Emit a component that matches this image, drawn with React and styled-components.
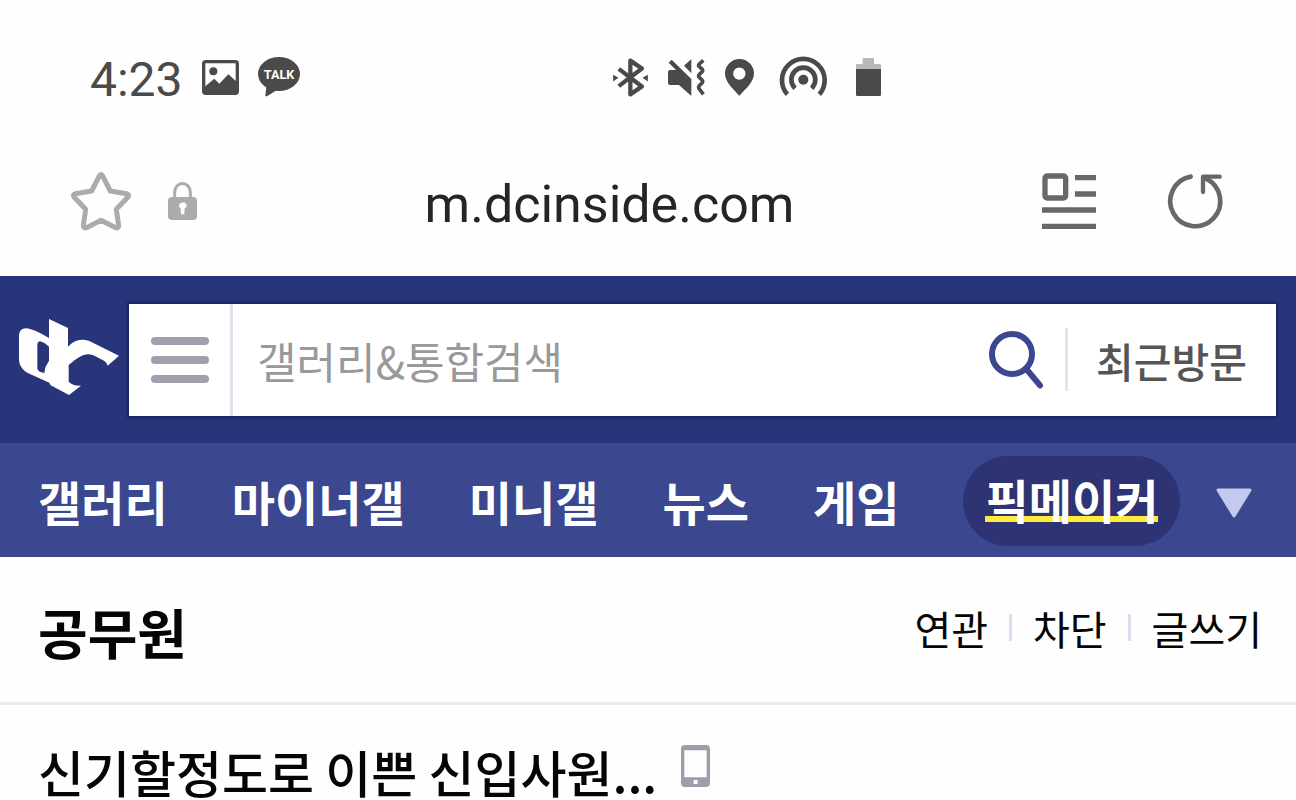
import React from "react";
import styled, { createGlobalStyle } from "styled-components";

const GlobalStyle = createGlobalStyle`
  * {
    box-sizing: border-box;
  }

  body {
    margin: 0;
    background: #fefefe;
    color: #050505;
    font-family: "Noto Sans CJK KR", "Noto Sans", sans-serif;
  }

  svg {
    display: block;
    flex: none;
    overflow: visible;
  }
`;

const IconButton = styled.button`
  display: flex;
  padding: 0;
  border: 0;
  background: none;
  color: inherit;
  cursor: pointer;
`;

const StatusBar = styled.div`
  display: flex;
  justify-content: space-between;
  align-items: center;
  height: 154px;
  padding: 0 412px 0 90px;
  color: #4a4a4a;
`;

const StatusGroup = styled.div`
  display: flex;
  align-items: center;
  gap: ${(props) => props.$gap}px;
`;

const Clock = styled.time`
  padding-top: 5px;
  font-family: Roboto, sans-serif;
  font-size: 48px;
  line-height: 56px;
`;

const AddressBar = styled.div`
  display: flex;
  align-items: center;
  height: 122px;
  padding: 0 74px 28px 71px;
`;

const AddressGroup = styled.div`
  display: flex;
  align-items: center;
  gap: ${(props) => props.$gap}px;
  color: ${(props) => props.$color};
`;

const Address = styled.div`
  flex: 1;
  padding: 8px 20px 0 0;
  color: #252525;
  font-family: Roboto, sans-serif;
  font-size: 52px;
  line-height: 64px;
  text-align: center;
`;

const Header = styled.header`
  display: flex;
  align-items: center;
  height: 167px;
  padding: 0 20px 0 19px;
  background: #29357a;
`;

const Logo = styled.a`
  margin: 0 10px 5px 0;
`;

const SearchForm = styled.form`
  display: flex;
  flex: 1;
  align-items: center;
  height: 112px;
  background: #fff;
  box-shadow: 0 0 2px 2px #1b2560;
`;

const MenuButton = styled(IconButton)`
  align-items: center;
  justify-content: center;
  width: 104px;
  height: 100%;
  border-right: 3px solid #e3e2ec;
  color: #a09fac;
`;

const SearchInput = styled.input`
  flex: 1;
  min-width: 0;
  height: 100%;
  padding: 0 24px;
  border: 0;
  outline: 0;
  background: none;
  font-family: inherit;
  font-size: 43px;

  &::placeholder {
    color: #999;
    opacity: 1;
  }
`;

const Divider = styled.span`
  width: 3px;
  height: ${(props) => props.$height}px;
  margin: 0 ${(props) => props.$space}px;
  background: ${(props) => props.$color};
`;

const RecentButton = styled(IconButton)`
  margin: 0 29px 0 6px;
  color: #555;
  font-family: inherit;
  font-size: 41px;
  font-weight: 500;
  line-height: 60px;
`;

const Nav = styled.nav`
  display: flex;
  align-items: center;
  justify-content: space-between;
  height: 114px;
  padding: 2px 44px 0 38px;
  background: #3b478e;
  color: #fff;
`;

const NavList = styled.div`
  display: flex;
  align-items: center;
  gap: 64px;
`;

const NavLink = styled.a`
  color: inherit;
  font-size: 47px;
  font-weight: 700;
  line-height: 60px;
  text-decoration: none;
  white-space: nowrap;
`;

const NavPill = styled(NavLink)`
  display: flex;
  align-items: center;
  height: 90px;
  padding: 0 22px 4px;
  border-radius: 45px;
  background: #2d3373;
`;

const Underlined = styled.span`
  background: linear-gradient(#ffeb3b, #ffeb3b) 0 47px / 100% 6px no-repeat;
`;

const MoreButton = styled(IconButton)`
  padding-top: 4px;
  color: #c5c9ef;
`;

const GalleryHead = styled.div`
  display: flex;
  align-items: center;
  justify-content: space-between;
  height: 148px;
  padding: 0 34px 0 38px;
  border-bottom: 3px solid #ebebeb;
`;

const GalleryName = styled.h1`
  margin: 0;
  padding-top: 4px;
  font-size: 54px;
  font-weight: 700;
  line-height: 72px;
`;

const GalleryLinks = styled.div`
  display: flex;
  align-items: center;
  padding-bottom: 4px;
`;

const GalleryLink = styled.a`
  color: inherit;
  font-size: 40px;
  line-height: 60px;
  text-decoration: none;
`;

const Post = styled.article`
  display: flex;
  align-items: center;
  gap: 24px;
  padding: 31px 38px 4px;
`;

const PostTitle = styled.h2`
  margin: 0;
  padding-top: 10px;
  font-size: 50px;
  font-weight: 500;
  line-height: 50px;
`;

const PictureIcon = () => (
  <svg width="37" height="35" viewBox="0 0 111 105" aria-hidden="true">
    <rect x="5" y="5" width="101" height="95" rx="6" fill="none" stroke="currentColor" strokeWidth="10" />
    <circle cx="34" cy="34" r="12" fill="currentColor" />
    <path d="M8 80L37 56L52 71L79 43L104 65V98H8Z" fill="currentColor" />
  </svg>
);

const TalkIcon = () => (
  <svg width="42" height="40" viewBox="0 0 126 120" role="img" aria-label="TALK">
    <ellipse cx="63" cy="51" rx="63" ry="51" fill="currentColor" />
    <path d="M26 84L22 115Q23 120 28 117L58 98Z" fill="currentColor" />
    <text
      x="63"
      y="67"
      fill="#fff"
      fontFamily="Roboto, sans-serif"
      fontSize="38"
      fontWeight="700"
      textAnchor="middle"
    >
      TALK
    </text>
  </svg>
);

const BluetoothIcon = () => (
  <svg width="35" height="39" viewBox="0 0 105 118" fill="currentColor" aria-hidden="true">
    <path
      d="M17 33L87 86L52 110V8L87 32L17 85"
      fill="none"
      stroke="currentColor"
      strokeWidth="13"
      strokeLinejoin="round"
    />
    <path d="M0 51L16 60L0 71ZM105 51L89 60L105 71Z" />
  </svg>
);

const MuteIcon = () => (
  <svg width="37" height="37" viewBox="0 0 111 111" fill="currentColor" aria-hidden="true">
    <path d="M6 33H24L2 11L11 2L70 60V111L33 78H6Q0 78 0 72V39Q0 33 6 33Z" />
    <path d="M48 20L70 0V43Z" />
    <path
      d="M106 4L94 15Q90 19 94 23L102 30Q106 35 102 39L94 46Q90 51 94 55L102 63Q106 68 102 72L94 80Q90 85 94 90L106 106"
      fill="none"
      stroke="currentColor"
      strokeWidth="11"
    />
  </svg>
);

const PinIcon = () => (
  <svg width="29" height="37" viewBox="0 0 89 112" fill="currentColor" aria-hidden="true">
    <path
      fillRule="evenodd"
      d="M44 112C20 87 0 68 0 44A44 44 0 0 1 89 44C89 68 68 87 44 112ZM44 25A19 19 0 1 0 44 63A19 19 0 1 0 44 25Z"
    />
  </svg>
);

const HotspotIcon = () => (
  <svg width="59" height="40" viewBox="-18 3 177 120" fill="none" stroke="currentColor" strokeWidth="14" aria-hidden="true">
    <circle cx="70" cy="71" r="15" fill="currentColor" stroke="none" />
    <path d="M45 97A36 36 0 1 1 95 97" />
    <path d="M22 115A64 64 0 1 1 118 115" />
  </svg>
);

const BatteryIcon = () => (
  <svg width="31" height="38" viewBox="-9 0 93 114" aria-hidden="true">
    <path d="M20 3Q20 0 23 0H51Q54 0 54 3V18H72Q75 18 75 21V40H0V21Q0 18 3 18H20Z" fill="#b8b8b8" />
    <path d="M0 33H75V110Q75 114 71 114H4Q0 114 0 110Z" fill="currentColor" />
  </svg>
);

const StarIcon = () => (
  <svg width="60" height="58" viewBox="62 64 180 174" aria-hidden="true">
    <path
      d="M147 76Q152 67 157 76L180 121L229 129Q238 132 233 139L198 176L205 225Q204 234 196 231L152 209L109 231Q100 234 99 225L106 176L71 139Q66 132 75 129L124 121Z"
      fill="none"
      stroke="currentColor"
      strokeWidth="15"
      strokeLinejoin="round"
    />
  </svg>
);

const LockIcon = () => (
  <svg width="29" height="38" viewBox="0 0 87 114" aria-hidden="true">
    <path d="M20 50V30A23 25 0 0 1 67 30V50" fill="none" stroke="currentColor" strokeWidth="9" />
    <path
      fillRule="evenodd"
      fill="currentColor"
      d="M12 45H75Q87 45 87 57V103Q87 114 75 114H12Q0 114 0 103V57Q0 45 12 45ZM43 62A9 9 0 0 0 38 79L39 97H49L50 79A9 9 0 0 0 43 62Z"
    />
  </svg>
);

const ReaderIcon = () => (
  <svg width="54" height="56" viewBox="0 0 162 168" fill="none" stroke="currentColor" strokeWidth="16" aria-hidden="true">
    <rect x="9" y="9" width="62" height="66" rx="7" />
    <path d="M99 14H162M99 63H162M0 111H162M0 160H162" />
  </svg>
);

const RefreshIcon = () => (
  <svg width="54" height="54" viewBox="0 0 162 162" fill="none" stroke="currentColor" strokeWidth="14" strokeLinecap="round" strokeLinejoin="round" aria-hidden="true">
    <path d="M68 8A75 75 0 1 0 114 14" />
    <path d="M155 8H105V54" strokeWidth="13" />
  </svg>
);

const DcLogo = () => (
  <svg width="100" height="76" viewBox="27 25 300 228" fill="#fff" aria-hidden="true">
    <path
      fillRule="evenodd"
      d="M27 78C27 60 36 52 50 53C68 55 96 70 117 82V25L174 52V108C192 88 212 82 238 91L327 135L293 165Q290 154 282 150L250 134C226 124 206 138 176 163V213C185 221 196 226 213 225L177 253L122 224L118 216L55 188C36 178 27 162 27 145ZM82 104Q82 92 91 92Q106 96 117 108V150L106 170L103 187Q82 184 82 172Z"
    />
  </svg>
);

const HamburgerIcon = () => (
  <svg width="58" height="46" viewBox="0 0 58 46" fill="currentColor" aria-hidden="true">
    <rect width="58" height="8" rx="4" />
    <rect y="19" width="58" height="8" rx="4" />
    <rect y="38" width="58" height="8" rx="4" />
  </svg>
);

const SearchIcon = () => (
  <svg width="54" height="58" viewBox="0 0 162 174" fill="none" stroke="#3b4890" aria-hidden="true">
    <circle cx="69" cy="69" r="60" strokeWidth="18" />
    <path d="M112 114L153 163" strokeWidth="18" strokeLinecap="round" />
  </svg>
);

const TriangleIcon = () => (
  <svg width="36" height="30" viewBox="0 0 36 30" aria-hidden="true">
    <path d="M2 2H34L18 28Z" fill="currentColor" stroke="currentColor" strokeWidth="3" strokeLinejoin="round" />
  </svg>
);

const PhoneIcon = () => (
  <svg width="29" height="42" viewBox="0 0 87 126" aria-hidden="true">
    <path
      fillRule="evenodd"
      fill="#9f9dab"
      d="M12 0H75Q87 0 87 12V114Q87 126 75 126H12Q0 126 0 114V12Q0 0 12 0ZM10 16V97H77V16ZM38 105V117H50V105Z"
    />
  </svg>
);

const menu = ["갤러리", "마이너갤", "미니갤", "뉴스", "게임"];

const App = () => (
  <>
    <GlobalStyle />
    <StatusBar>
      <StatusGroup $gap={19}>
        <Clock>4:23</Clock>
        <PictureIcon />
        <TalkIcon />
      </StatusGroup>
      <StatusGroup $gap={20}>
        <BluetoothIcon />
        <MuteIcon />
        <PinIcon />
        <HotspotIcon />
        <BatteryIcon />
      </StatusGroup>
    </StatusBar>

    <AddressBar>
      <AddressGroup $gap={37} $color="#ababab">
        <IconButton type="button" aria-label="Bookmark">
          <StarIcon />
        </IconButton>
        <LockIcon />
      </AddressGroup>
      <Address>m.dcinside.com</Address>
      <AddressGroup $gap={72} $color="#686868">
        <IconButton type="button" aria-label="Reader">
          <ReaderIcon />
        </IconButton>
        <IconButton type="button" aria-label="Refresh">
          <RefreshIcon />
        </IconButton>
      </AddressGroup>
    </AddressBar>

    <Header>
      <Logo href="#" aria-label="dcinside">
        <DcLogo />
      </Logo>
      <SearchForm onSubmit={(e) => e.preventDefault()}>
        <MenuButton type="button" aria-label="메뉴">
          <HamburgerIcon />
        </MenuButton>
        <SearchInput type="text" placeholder="갤러리&통합검색" aria-label="갤러리&통합검색" />
        <IconButton type="submit" aria-label="검색">
          <SearchIcon />
        </IconButton>
        <Divider $height={63} $space={22} $color="#e3e3e8" />
        <RecentButton type="button">최근방문</RecentButton>
      </SearchForm>
    </Header>

    <Nav>
      <NavList>
        {menu.map((name) => (
          <NavLink href="#" key={name}>
            {name}
          </NavLink>
        ))}
        <NavPill href="#">
          <Underlined>픽메이커</Underlined>
        </NavPill>
      </NavList>
      <MoreButton type="button" aria-label="더보기">
        <TriangleIcon />
      </MoreButton>
    </Nav>

    <GalleryHead>
      <GalleryName>공무원</GalleryName>
      <GalleryLinks>
        <GalleryLink href="#">연관</GalleryLink>
        <Divider $height={27} $space={21} $color="#dcdaee" />
        <GalleryLink href="#">차단</GalleryLink>
        <Divider $height={27} $space={21} $color="#dcdaee" />
        <GalleryLink href="#">글쓰기</GalleryLink>
      </GalleryLinks>
    </GalleryHead>

    <Post>
      <PostTitle>신기할정도로 이쁜 신입사원...</PostTitle>
      <PhoneIcon />
    </Post>
  </>
);

export default App;
